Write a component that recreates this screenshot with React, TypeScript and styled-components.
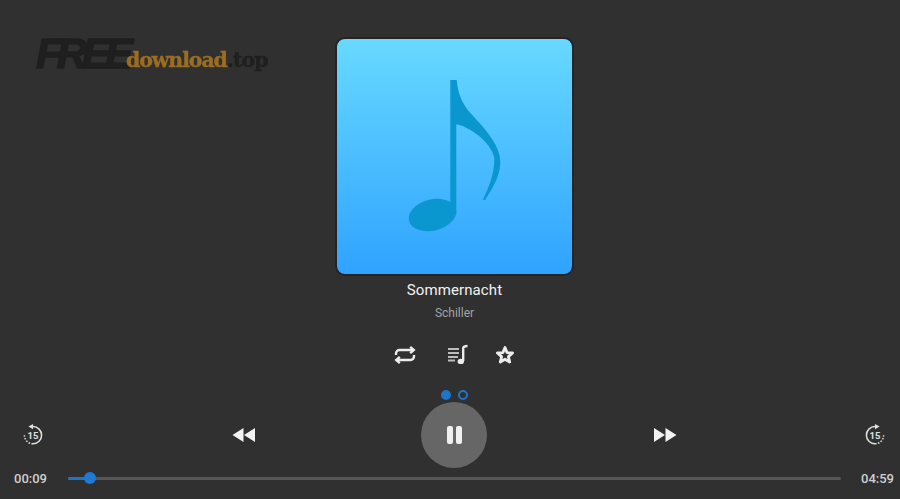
import styled, { createGlobalStyle } from "styled-components";

const GlobalStyle = createGlobalStyle`
  html, body {
    margin: 0;
    padding: 0;
    background: #303030;
    font-family: Roboto, "Liberation Sans", sans-serif;
  }
`;

const Page = styled.div`
  position: relative;
  width: 900px;
  height: 499px;
  overflow: hidden;
  background: #303030;
`;

// Watermark sitting over the player
const Watermark = styled.div`
  position: absolute;
  left: 36px;
  top: 30px;
  display: flex;
  align-items: baseline;
  white-space: nowrap;
  filter: blur(0.5px);
`;

const LogoFree = styled.span`
  font: italic 700 42px "Liberation Sans", sans-serif;
  letter-spacing: -5px;
  color: #1f1f1f;
  -webkit-text-stroke: 1.4px #1f1f1f;
  margin-right: -2px;
`;

const LogoDownload = styled.span`
  font: 700 20.5px "DejaVu Serif", serif;
  letter-spacing: -1.1px;
  color: #9c6d21;
  -webkit-text-stroke: 0.4px #9c6d21;
  transform: translateY(-1px);
`;

const LogoTop = styled.span`
  font: 700 20.5px "DejaVu Serif", serif;
  letter-spacing: -1px;
  color: #1f1f1f;
  -webkit-text-stroke: 0.4px #1f1f1f;
  transform: translateY(-1px);
`;

const NowPlaying = styled.div`
  display: flex;
  flex-direction: column;
  align-items: center;
  padding: 37px 0 0 9px;
`;

const Cover = styled.div`
  width: 239px;
  height: 239px;
  box-sizing: border-box;
  border: 2px solid #242424;
  border-radius: 10px;
  background: linear-gradient(180deg, #68d9ff 0%, #2fa3ff 100%);
  display: flex;
`;

const Title = styled.div`
  margin-top: 4px;
  font-size: 15px;
  line-height: 20px;
  letter-spacing: 0.1px;
  color: #f2f2f2;
`;

const Artist = styled.div`
  margin-top: 5px;
  font-size: 12px;
  line-height: 16px;
  color: #a3a3a3;
`;

const Actions = styled.div`
  margin-top: 22px;
  height: 24px;
  display: flex;
  gap: 23px;
  color: #ececec;
`;

const ActionIcon = styled.svg<{ $extra?: number }>`
  width: 24px;
  height: 24px;
  margin-right: ${(p) => p.$extra ?? 0}px;
`;

const Pager = styled.div`
  margin-top: 23px;
  height: 10px;
  display: flex;
  align-items: center;
  gap: 7px;
`;

const Dot = styled.span<{ $active?: boolean }>`
  box-sizing: border-box;
  width: 10px;
  height: 10px;
  border-radius: 50%;
  border: 2px solid #1f74c9;
  background: ${(p) => (p.$active ? "#1f74c9" : "transparent")};
`;

const Controls = styled.div`
  margin-top: 2px;
  height: 66px;
  padding: 0 14px 0 22px;
  display: flex;
  justify-content: space-between;
  align-items: center;
`;

// Fixed width slots keep the five buttons evenly spaced by their centres
const Slot = styled.div`
  width: 22px;
  display: flex;
  justify-content: center;
  color: #e0e0e0;
`;

const PauseButton = styled.div`
  flex: none;
  width: 66px;
  height: 66px;
  border-radius: 50%;
  background: #666666;
  display: flex;
  align-items: center;
  justify-content: center;
  gap: 3px;
`;

const PauseBar = styled.span`
  width: 6px;
  height: 18px;
  border-radius: 2px;
  background: #f0f0f0;
`;

const SkipIcon = styled.svg`
  flex: none;
  width: 24px;
  height: 24px;
`;

const SeekRow = styled.div`
  height: 20px;
  padding: 0 5px 0 14px;
  display: flex;
  align-items: center;
  gap: 20px;
`;

const Time = styled.span`
  width: 34px;
  font-size: 13px;
  font-weight: 500;
  color: #cfcfcf;
`;

const Track = styled.div`
  position: relative;
  flex: 1;
  height: 3px;
  border-radius: 2px;
  background: #565656;
`;

const TrackFill = styled.div`
  height: 100%;
  border-radius: 2px;
  background: #1f74c9;
`;

const Thumb = styled.span`
  position: absolute;
  top: -5px;
  width: 12px;
  height: 12px;
  margin-left: -6px;
  border-radius: 50%;
  background: #1f7ad6;
`;

const MusicNote = () => (
  <svg width="235" height="235" viewBox="1 1 235 235">
    <path
      fill="#0a97cf"
      d="M114.3 42 L120.7 42 C121.5 50 123 60 131.7 72 C146 88 165 106 164.3 125.3 C164 139 155 153 149 162 L146.7 162 C152 151 158.5 137 158.3 120 C155 104 134 89 120.3 86.3 L120.3 177 L112 177 L114.3 165 Z"
    />
    <ellipse cx="96.5" cy="177" rx="24.2" ry="15.6" fill="#0a97cf" transform="rotate(-14 96.5 177)" />
  </svg>
);

const Replay = ({ forward }: { forward?: boolean }) => {
  const flip = forward ? "translate(24 0) scale(-1 1)" : undefined;
  return (
    <SkipIcon viewBox="0 0 24 24">
      <g transform={flip}>
        <path d="M12 3.6 A8.6 8.6 0 0 1 12 20.8" fill="none" stroke="currentColor" strokeWidth="1.5" />
        <path d="M12 20.8 A8.6 8.6 0 0 1 3.4 12.2" fill="none" stroke="currentColor" strokeWidth="1.5" strokeDasharray="1.6 1.4" />
        <path d="M12 1 L7.4 3.6 L12 6.2 Z" fill="currentColor" />
      </g>
      <text
        x="12"
        y="15.6"
        textAnchor="middle"
        fontFamily="Roboto, sans-serif"
        fontWeight="700"
        fontSize="9.5"
        fill="currentColor"
      >
        15
      </text>
    </SkipIcon>
  );
};

const Rewind = () => (
  <SkipIcon viewBox="0 0 24 24">
    <path fill="#f2f2f2" d="M0.5 12 L11.5 5 L11.5 19 Z M12 12 L23 5 L23 19 Z" />
  </SkipIcon>
);

const Forward = () => (
  <SkipIcon viewBox="0 0 24 24">
    <path fill="#f2f2f2" d="M1 5 L12 12 L1 19 Z M12.5 5 L23.5 12 L12.5 19 Z" />
  </SkipIcon>
);

const App = () => {
  const position = 22;

  return (
    <Page>
      <GlobalStyle />
      <Watermark>
        <LogoFree>FREE</LogoFree>
        <LogoDownload>download</LogoDownload>
        <LogoTop>.top</LogoTop>
      </Watermark>

      <NowPlaying>
        <Cover>
          <MusicNote />
        </Cover>
        <Title>Sommernacht</Title>
        <Artist>Schiller</Artist>
        <Actions>
          <ActionIcon $extra={6} viewBox="0 0 24 24" fill="none" stroke="currentColor" strokeWidth="2.4">
            <path d="M3 12 V10.5 A3.5 3.5 0 0 1 6.5 7 H20" />
            <path d="M21 12 V13.5 A3.5 3.5 0 0 1 17.5 17 H4" />
            <path d="M17.2 3.8 L20.8 7 L17.2 10.2" />
            <path d="M6.8 13.8 L3.2 17 L6.8 20.2" />
          </ActionIcon>
          <ActionIcon viewBox="0 0 24 24" fill="none" stroke="currentColor" strokeWidth="2">
            <path d="M2 6 H13 M2 10 H13 M2 14 H12 M2 17.5 H9" stroke="#bdbdbd" />
            <path d="M17.2 18 V5 C17.7 3.2 19 3 21.5 3" strokeWidth="2.4" />
            <ellipse cx="14.8" cy="18.4" rx="3.2" ry="2.6" fill="currentColor" stroke="none" />
          </ActionIcon>
          <ActionIcon viewBox="0 0 24 24" fill="none" stroke="currentColor" strokeWidth="2.8" strokeLinejoin="round">
            <path d="M12 4.5 L14.1 9.6 L19.6 10 L15.4 13.6 L16.7 19 L12 16.2 L7.3 19 L8.6 13.6 L4.4 10 L9.9 9.6 Z" />
          </ActionIcon>
        </Actions>
        <Pager>
          <Dot $active />
          <Dot />
        </Pager>
      </NowPlaying>

      <Controls>
        <Slot>
          <Replay />
        </Slot>
        <Slot>
          <Rewind />
        </Slot>
        <Slot>
          <PauseButton>
            <PauseBar />
            <PauseBar />
          </PauseButton>
        </Slot>
        <Slot>
          <Forward />
        </Slot>
        <Slot>
          <Replay forward />
        </Slot>
      </Controls>

      <SeekRow>
        <Time>00:09</Time>
        <Track>
          <TrackFill style={{ width: position }} />
          <Thumb style={{ left: position }} />
        </Track>
        <Time>04:59</Time>
      </SeekRow>
    </Page>
  );
};

export default App;
